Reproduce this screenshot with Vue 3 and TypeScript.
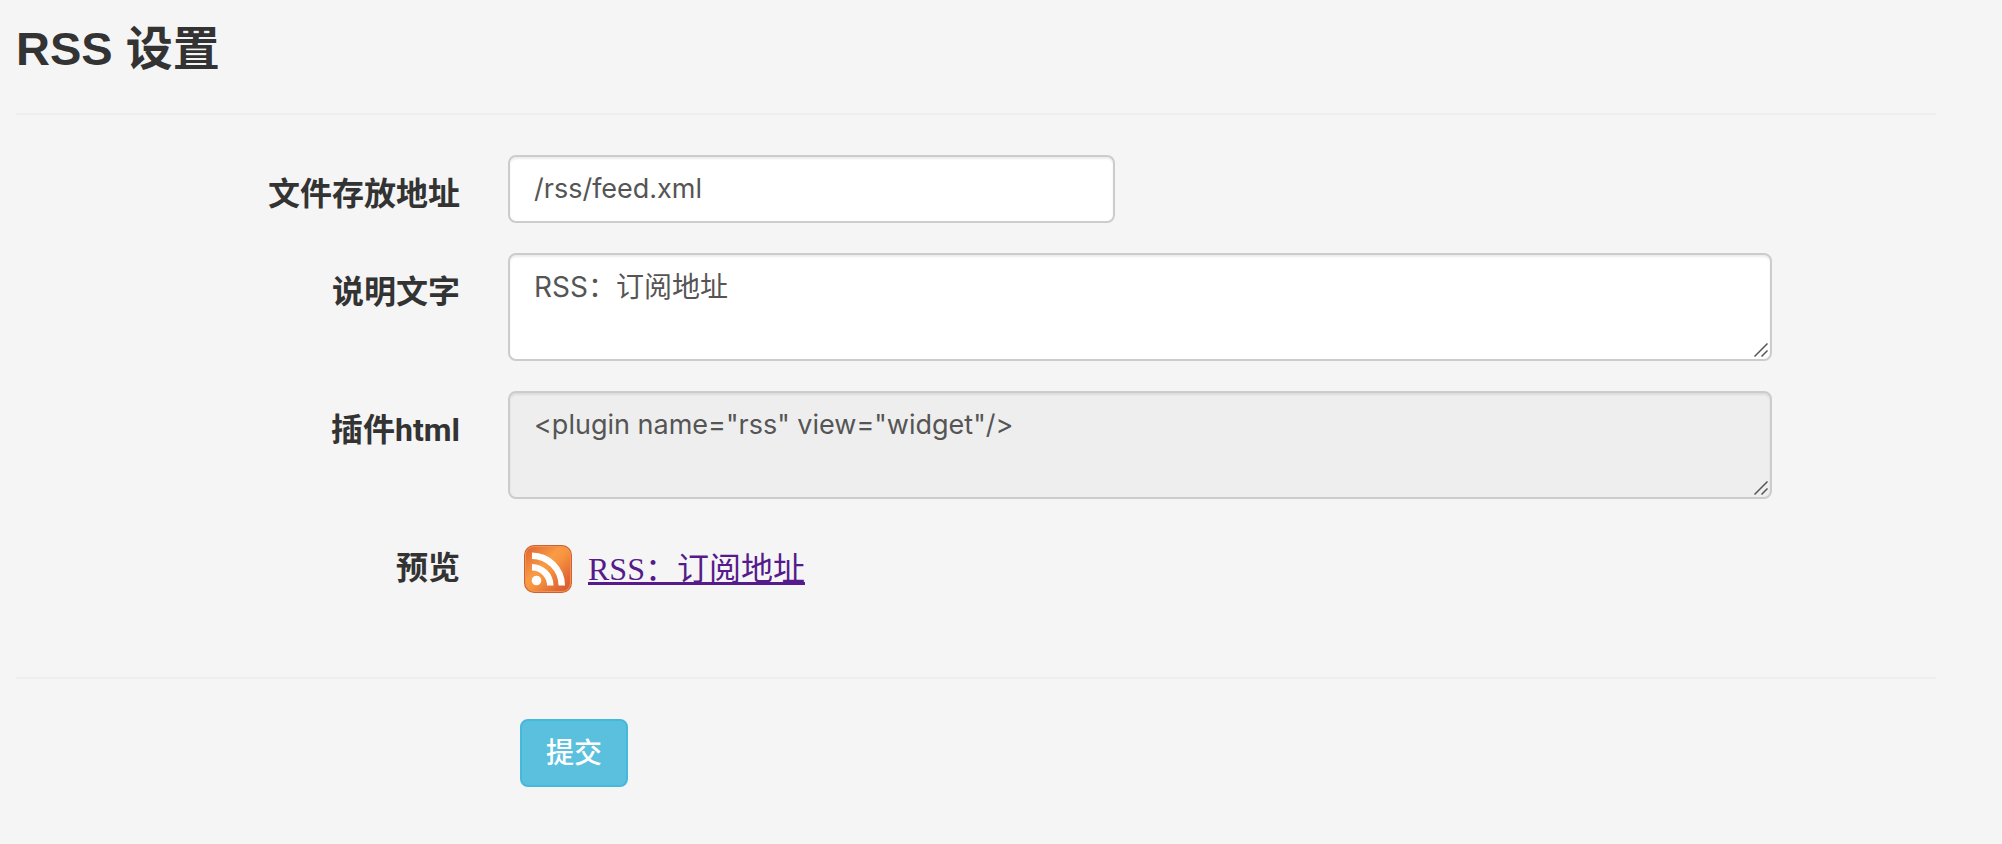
<script setup lang="ts">
import { ref } from 'vue'

const path = ref('/rss/feed.xml')
const caption = ref('RSS：订阅地址')
const pluginHtml = '<plugin name="rss" view="widget"/>'
</script>

<template>
  <main class="page">
    <h3 class="title">RSS 设置</h3>
    <hr class="rule" />
    <form @submit.prevent>
      <div class="rows">
        <div class="row">
          <label class="label" for="path">文件存放地址</label>
          <div class="field">
            <input id="path" v-model="path" class="control code short" type="text" />
          </div>
        </div>
        <div class="row">
          <label class="label" for="caption">说明文字</label>
          <div class="field">
            <textarea id="caption" v-model="caption" class="control area"></textarea>
            <svg class="grip" viewBox="0 0 14 14" aria-hidden="true">
              <path d="M0.5 13.5L13.5 0.5M7.5 13.5L13.5 7.5" />
            </svg>
          </div>
        </div>
        <div class="row">
          <label class="label" for="plugin">插件html</label>
          <div class="field">
            <textarea id="plugin" class="control code area" readonly :value="pluginHtml"></textarea>
            <svg class="grip" viewBox="0 0 14 14" aria-hidden="true">
              <path d="M0.5 13.5L13.5 0.5M7.5 13.5L13.5 7.5" />
            </svg>
          </div>
        </div>
        <div class="row">
          <span class="label">预览</span>
          <div class="field preview">
            <svg class="feed" viewBox="0 0 48 48" aria-hidden="true">
              <defs>
                <linearGradient id="feed-shade" x1="0" y1="0" x2="1" y2="1">
                  <stop offset="0" stop-color="#df6434" />
                  <stop offset="0.4" stop-color="#f99b45" />
                  <stop offset="0.52" stop-color="#f8953f" />
                  <stop offset="0.78" stop-color="#e26f38" />
                  <stop offset="1" stop-color="#d6552f" />
                </linearGradient>
              </defs>
              <rect width="48" height="48" rx="10" fill="#cf6030" />
              <rect x="1" y="1" width="46" height="46" rx="9" fill="#f0944f" />
              <rect x="2" y="2" width="44" height="44" rx="8" fill="url(#feed-shade)" />
              <circle cx="12.5" cy="35.5" r="4.8" fill="#fff" />
              <path
                d="M8 19A21.5 21.5 0 0 1 29.5 40.5H23A15 15 0 0 0 8 25.5ZM8 7.5A33 33 0 0 1 41 40.5H34.5A26.5 26.5 0 0 0 8 14Z"
                fill="#fff"
              />
            </svg>
            <a class="link" href="/rss/feed.xml">{{ caption }}</a>
          </div>
        </div>
      </div>
      <hr class="rule" />
      <div class="row">
        <div class="field actions">
          <button class="submit" type="submit">提交</button>
        </div>
      </div>
    </form>
  </main>
</template>

<style>
body {
  margin: 0;
  background: #f5f5f5;
}
</style>

<style scoped>
.page {
  padding: 20px 66px 56px 16px;
  color: #333;
  font-family: 'Liberation Sans', 'Noto Sans CJK SC', sans-serif;
}
.title {
  margin: 0 0 35px;
  font-size: 47px;
  line-height: 58px;
  font-weight: 700;
}
.rule {
  height: 2px;
  margin: 0 0 40px;
  border: 0;
  background: #eee;
}
.rows {
  display: grid;
  gap: 30px;
  margin-bottom: 84px;
}
.row {
  display: grid;
  grid-template-columns: minmax(0, 444fr) minmax(0, 1264fr) minmax(0, 116fr);
  column-gap: 48px;
}
.label {
  padding-top: 17px;
  font-family: Roboto, 'Noto Sans CJK SC', sans-serif;
  font-size: 32px;
  line-height: 44px;
  font-weight: 700;
  text-align: right;
}
.field {
  position: relative;
  grid-column: 2;
}
.control {
  display: block;
  box-sizing: border-box;
  width: 100%;
  margin: 0;
  padding: 12px 24px;
  border: 2px solid #ccc;
  border-radius: 8px;
  background: #fff;
  box-shadow: inset 0 2px 2px rgba(0, 0, 0, 0.075);
  color: #555;
  font-family: Inter, 'Noto Sans CJK SC', sans-serif;
  font-size: 28px;
  line-height: 40px;
  outline: none;
}
.code {
  font-size: 27px;
}
.short {
  width: 48%;
}
.area {
  height: 108px;
  resize: vertical;
}
.area::-webkit-resizer {
  background: transparent;
}
.area[readonly] {
  background: #eee;
}
.grip {
  position: absolute;
  right: 4px;
  bottom: 4px;
  width: 14px;
  height: 14px;
  fill: none;
  stroke: #555;
  stroke-width: 1.5;
  pointer-events: none;
}
.preview {
  display: flex;
  align-items: center;
  gap: 16px;
  padding: 16px 16px 0;
}
.feed {
  flex: none;
  width: 48px;
  height: 48px;
}
.link {
  color: #551a8b;
  font-family: 'Liberation Serif', 'Noto Sans CJK SC', serif;
  font-size: 32px;
  line-height: 44px;
  text-decoration: underline;
  text-decoration-thickness: 3px;
  text-decoration-skip-ink: none;
}
.actions {
  padding-left: 12px;
}
.submit {
  padding: 12px 24px;
  border: 2px solid #46b8da;
  border-radius: 8px;
  background: #5bc0de;
  color: #fff;
  font-family: Inter, 'Noto Sans CJK SC', sans-serif;
  font-size: 28px;
  font-weight: 500;
  line-height: 40px;
  cursor: pointer;
}
</style>
